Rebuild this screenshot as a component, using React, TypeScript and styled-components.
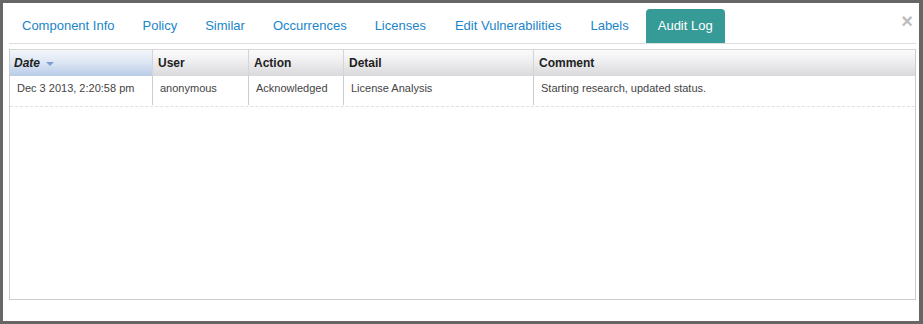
import styled, { createGlobalStyle } from "styled-components";

const GlobalStyle = createGlobalStyle`
  html, body {
    margin: 0;
    padding: 0;
    background: #666666;
  }
  body {
    font-family: "Liberation Sans", Arial, sans-serif;
    color: #333;
  }
`;

const tabs = [
  "Component Info",
  "Policy",
  "Similar",
  "Occurrences",
  "Licenses",
  "Edit Vulnerabilities",
  "Labels",
  "Audit Log",
];

const columns = [
  { title: "Date", width: "143px", sorted: true },
  { title: "User", width: "96px" },
  { title: "Action", width: "95px" },
  { title: "Detail", width: "190px" },
  { title: "Comment", width: "1fr" },
];

const rows = [
  [
    "Dec 3 2013, 2:20:58 pm",
    "anonymous",
    "Acknowledged",
    "License Analysis",
    "Starting research, updated status.",
  ],
];

const gridTemplate = columns.map((c) => c.width).join(" ");

function App() {
  return (
    <>
      <GlobalStyle />
      <StyledPanel>
        <StyledTabBar>
          {tabs.map((t) => (
            <StyledTab key={t} active={t === "Audit Log"}>
              {t}
            </StyledTab>
          ))}
          <StyledClose>×</StyledClose>
        </StyledTabBar>
        <StyledGrid>
          <StyledHeaderRow>
            {columns.map((c) => (
              <StyledHeaderCell key={c.title} sorted={!!c.sorted}>
                {c.title}
                {c.sorted && <StyledSortArrow />}
              </StyledHeaderCell>
            ))}
          </StyledHeaderRow>
          {rows.map((r, i) => (
            <StyledRow key={i}>
              {r.map((cell, j) => (
                <StyledCell key={j}>{cell}</StyledCell>
              ))}
            </StyledRow>
          ))}
        </StyledGrid>
      </StyledPanel>
    </>
  );
}

export default App;

const StyledPanel = styled.div`
  box-sizing: border-box;
  margin: 3px 4px 0 3px;
  height: 318px;
  background: #fff;
  padding: 6px 3px 0 6px;
`;

const StyledTabBar = styled.div`
  display: flex;
  align-items: flex-end;
  height: 34px;
  border-bottom: 1px solid #dddddd;
  padding-left: 1px;
  position: relative;
`;

const StyledTab = styled.div<{ active: boolean }>`
  height: 34px;
  box-sizing: border-box;
  display: flex;
  align-items: center;
  padding: 0 12px 1px;
  margin-right: 4px;
  font-size: 13px;
  color: ${(p) => (p.active ? "#fff" : "#1a85c9")};
  background: ${(p) => (p.active ? "#369a97" : "transparent")};
  border-radius: 4px 4px 0 0;

  &:nth-child(n + 6) {
    margin-left: 1px;
  }
`;

const StyledClose = styled.div`
  position: absolute;
  right: 3px;
  top: 2px;
  font-size: 20px;
  font-weight: bold;
  line-height: 20px;
  color: #bdbdbd;
`;

const StyledGrid = styled.div`
  margin-top: 5px;
  height: 251px;
  box-sizing: border-box;
  border: 1px solid #cccccc;
  border-top-color: #d6d6d6;
`;

const StyledHeaderRow = styled.div`
  display: grid;
  grid-template-columns: ${gridTemplate};
  height: 26px;
  background: linear-gradient(#fbfbfc, #f0f0f2 40%, #d9d9dc);
`;

const StyledHeaderCell = styled.div<{ sorted: boolean }>`
  display: flex;
  align-items: center;
  gap: 6px;
  padding-left: ${(p) => (p.sorted ? "4px" : "5px")};
  font-size: 12px;
  font-weight: bold;
  font-style: ${(p) => (p.sorted ? "italic" : "normal")};
  color: #222;
  border-right: 1px solid #d4d4d6;
  background: ${(p) =>
    p.sorted ? "linear-gradient(#f4f7fb, #dbe5f3 50%, #b8cbe8)" : "none"};

  &:last-child {
    border-right: none;
  }
`;

const StyledSortArrow = styled.span`
  width: 0;
  height: 0;
  margin-top: 2px;
  border-left: 4px solid transparent;
  border-right: 4px solid transparent;
  border-top: 4px solid #7d9fd2;
`;

const StyledRow = styled.div`
  display: grid;
  grid-template-columns: ${gridTemplate};
  height: 30px;
  border-bottom: 1px dashed #e0e0e0;
`;

const StyledCell = styled.div`
  padding: 6px 0 0 7px;
  font-size: 11px;
  color: #444;
  border-right: 1px solid #cccccc;
  margin-bottom: 1px;

  &:last-child {
    border-right: none;
  }
`;
